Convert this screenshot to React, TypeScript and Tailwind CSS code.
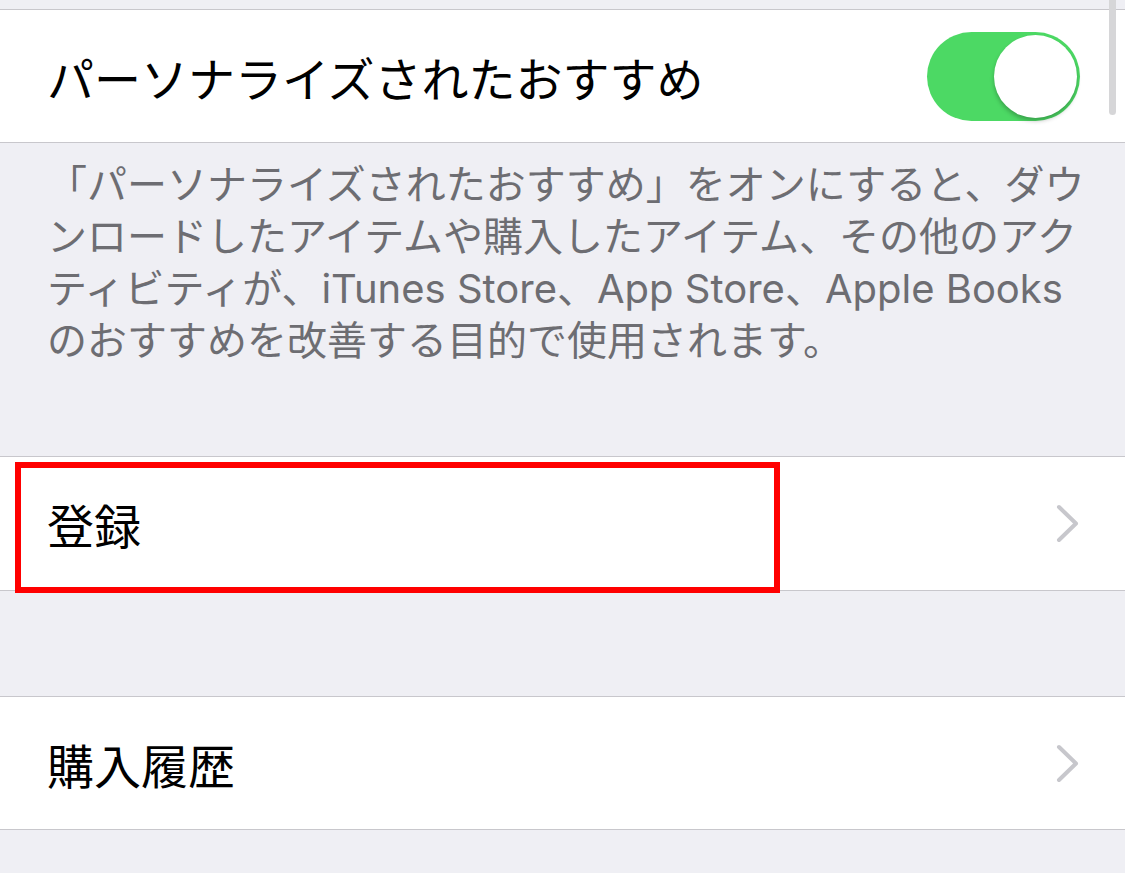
function Chevron() {
  return (
    <svg width="24" height="39" viewBox="0 0 24 39" fill="none" className="shrink-0">
      <polyline points="3,3 20,19.5 3,36" stroke="#c7c7cc" strokeWidth="4" strokeLinecap="round" strokeLinejoin="round" />
    </svg>
  );
}

function Toggle() {
  return (
    <div className="relative w-[153px] h-[89px] rounded-full bg-[#4cd964] shrink-0">
      <div className="absolute right-[3px] top-[3px] w-[83px] h-[83px] rounded-full bg-white shadow-[0_3px_4px_rgba(0,0,0,0.25)]" />
    </div>
  );
}

const desc = [
  "「パーソナライズされたおすすめ」をオンにすると、ダウ",
  "ンロードしたアイテムや購入したアイテム、その他のアク",
  "ティビティが、iTunes Store、App Store、Apple Books",
  "のおすすめを改善する目的で使用されます。",
];

export default function App() {
  return (
    <div
      className="relative w-[1125px] h-[873px] overflow-hidden bg-[#efeff4]"
      style={{ fontFamily: '"Noto Sans CJK JP", "Noto Sans", sans-serif' }}
    >
      <div className="h-[9px]" />

      <div className="h-[134px] bg-white border-y border-[#c8c7cc] flex items-center justify-between pl-[47px] pr-[45px]">
        <span className="text-[47px] text-black leading-none">パーソナライズされたおすすめ</span>
        <Toggle />
      </div>

      <div
        className="h-[313px] pt-[16px] pl-[47px]"
        style={{ fontFamily: 'Inter, "Noto Sans CJK JP", sans-serif' }}
      >
        {desc.map((line) => (
          <div key={line} className="text-[40px] leading-[52px] text-[#6d6d72] whitespace-nowrap">
            {line}
          </div>
        ))}
      </div>

      <div className="relative h-[135px] bg-white border-y border-[#c8c7cc] flex items-center justify-between pl-[47px] pr-[45px]">
        <span className="text-[47px] text-black leading-none">登録</span>
        <Chevron />
        <div className="absolute left-[15px] top-[5px] w-[765px] h-[131px] border-[6px] border-[#ff0000]" />
      </div>

      <div className="h-[105px]" />

      <div className="h-[134px] bg-white border-y border-[#c8c7cc] flex items-center justify-between pl-[47px] pr-[45px]">
        <span className="text-[47px] text-black leading-none">購入履歴</span>
        <Chevron />
      </div>

      <div className="absolute right-[9px] top-[-10px] w-[7px] h-[125px] rounded-full bg-[#d6d6d8]" />
    </div>
  );
}
